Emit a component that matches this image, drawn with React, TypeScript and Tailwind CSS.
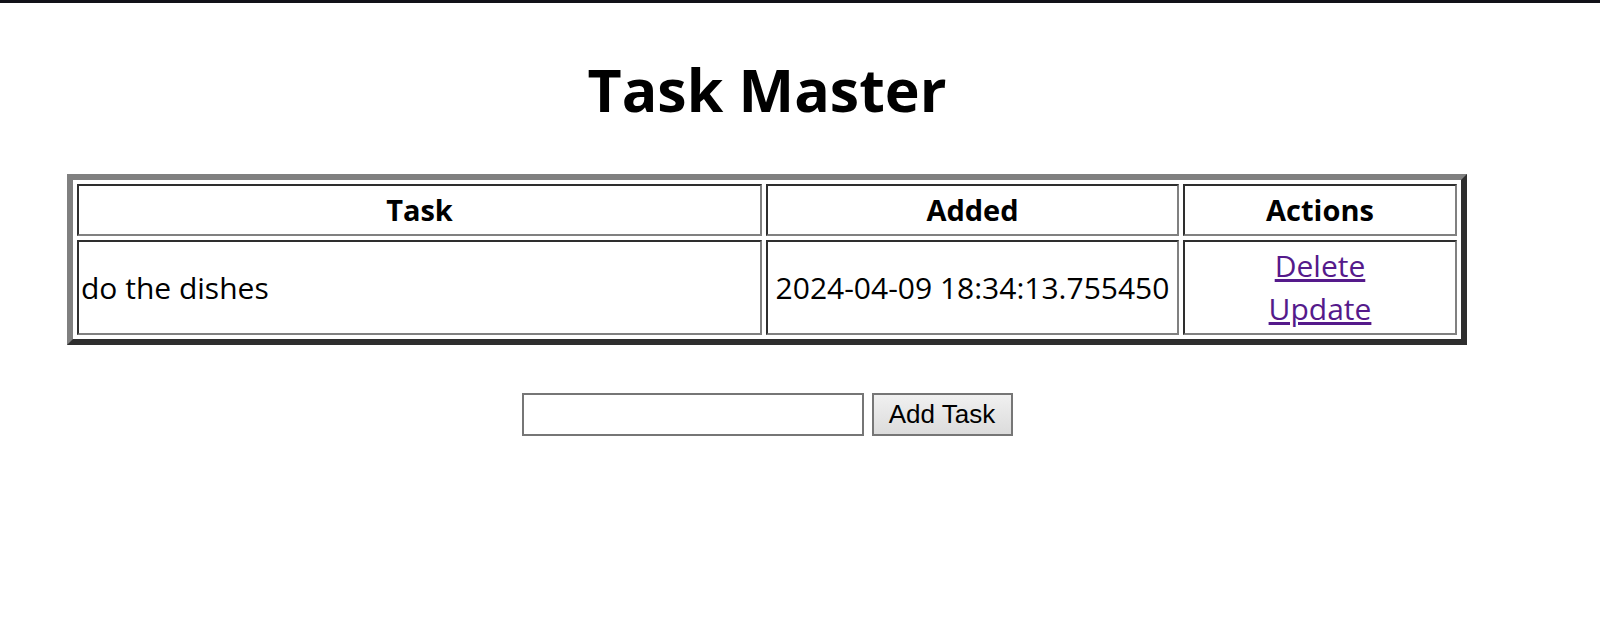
const tasks = [
  { id: 1, content: 'do the dishes', added: '2024-04-09 18:34:13.755450' },
];

export default function App() {
  return (
    <div className="min-h-screen bg-white font-['Open_Sans',sans-serif] text-black">
      <div className="h-[3px] w-full bg-[#121218]" />

      <div className="flex w-[1534px] flex-col items-center">
        <h1 className="mt-[54px] text-[59px] font-bold leading-[64px]">Task Master</h1>

        <table className="mt-[53px] table-fixed border-separate border-spacing-[4px] border-[6px] border-t-[#808080] border-l-[#808080] border-r-[#2e2e2e] border-b-[#2e2e2e]">
          <thead>
            <tr className="text-[29px]">
              <th className="h-[51px] w-[685px] border-2 border-t-[#2e2e2e] border-l-[#2e2e2e] border-r-[#808080] border-b-[#808080] p-[2px] font-bold">
                Task
              </th>
              <th className="h-[51px] w-[413px] border-2 border-t-[#2e2e2e] border-l-[#2e2e2e] border-r-[#808080] border-b-[#808080] p-[2px] font-bold">
                Added
              </th>
              <th className="h-[51px] w-[274px] border-2 border-t-[#2e2e2e] border-l-[#2e2e2e] border-r-[#808080] border-b-[#808080] p-[2px] font-bold">
                Actions
              </th>
            </tr>
          </thead>
          <tbody>
            {tasks.map((task) => (
              <tr key={task.id} className="text-[30px]">
                <td className="h-[95px] border-2 border-t-[#2e2e2e] border-l-[#2e2e2e] border-r-[#808080] border-b-[#808080] p-[2px] text-left align-middle">
                  {task.content}
                </td>
                <td className="h-[95px] whitespace-nowrap border-2 border-t-[#2e2e2e] border-l-[#2e2e2e] border-r-[#808080] border-b-[#808080] p-[2px] text-center align-middle">
                  {task.added}
                </td>
                <td className="h-[95px] border-2 border-t-[#2e2e2e] border-l-[#2e2e2e] border-r-[#808080] border-b-[#808080] p-[2px] text-center align-middle leading-[43px]">
                  <a href="#" className="text-[#551a8b] underline">
                    Delete
                  </a>
                  <br />
                  <a href="#" className="text-[#551a8b] underline">
                    Update
                  </a>
                </td>
              </tr>
            ))}
          </tbody>
        </table>

        <form className="mt-[48px] flex items-center gap-[8px]" onSubmit={(e) => e.preventDefault()}>
          <input
            type="text"
            className="h-[43px] w-[342px] border-2 border-[#767676] bg-white px-1 text-[23px]"
          />
          <button
            type="submit"
            className="h-[43px] w-[141px] border-2 border-[#767676] bg-gradient-to-b from-[#f0f0f0] to-[#dcdcdc] font-['Liberation_Sans',Arial,sans-serif] text-[26px] text-black"
          >
            Add Task
          </button>
        </form>
      </div>
    </div>
  );
}
